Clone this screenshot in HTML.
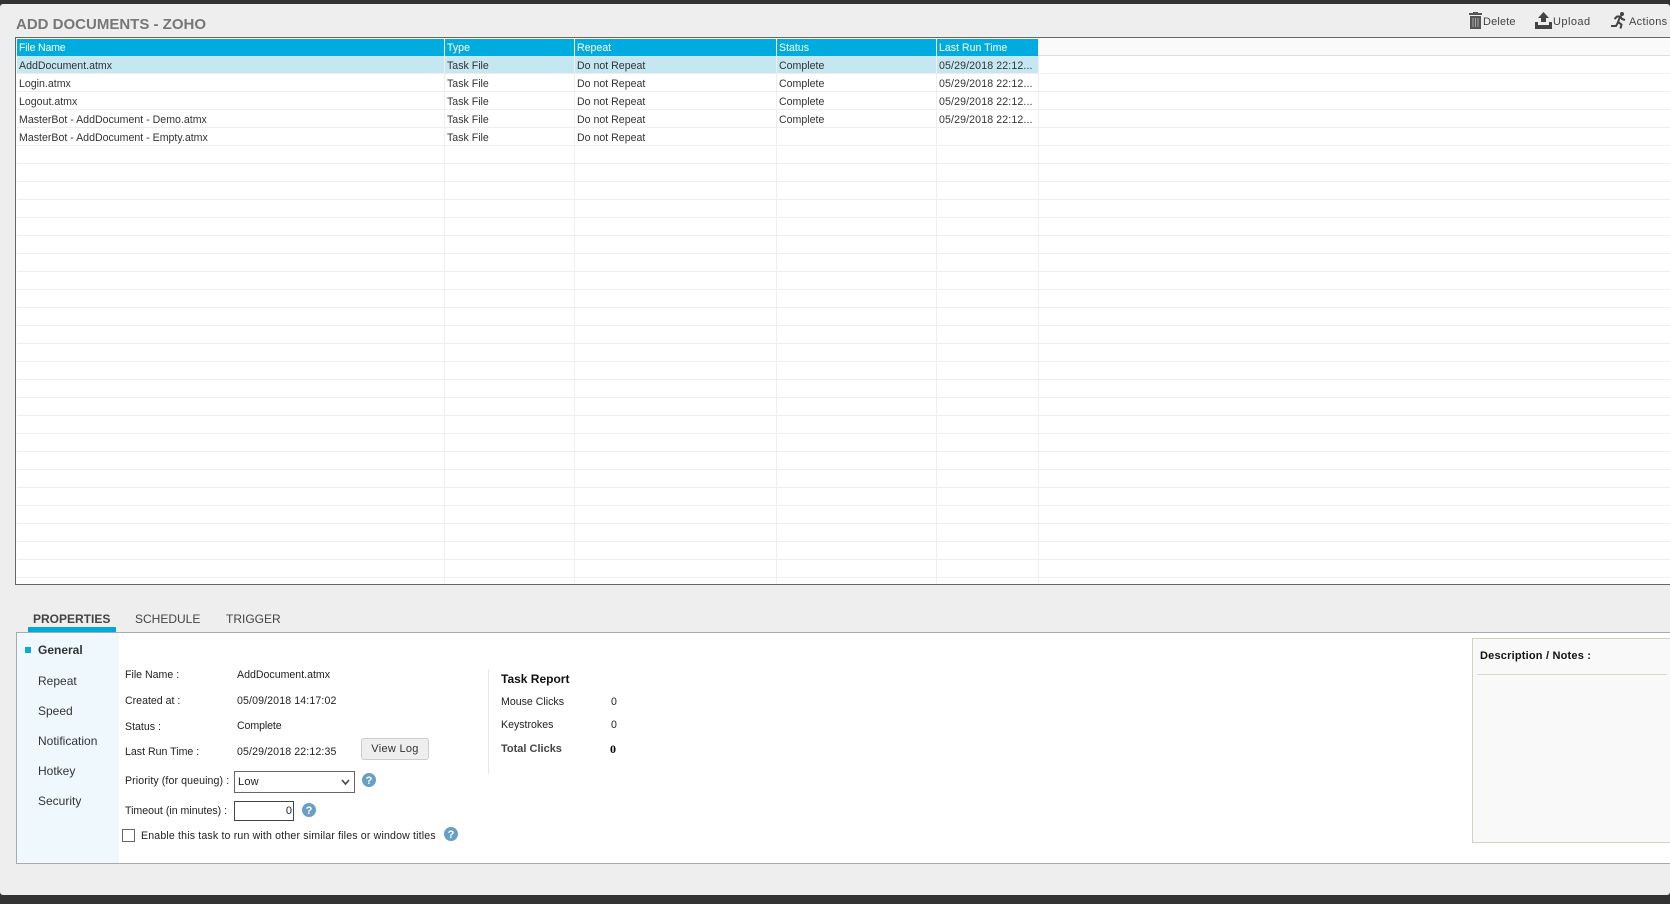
<!DOCTYPE html>
<html><head><meta charset="utf-8"><title>Add Documents - Zoho</title>
<style>
html,body{margin:0;padding:0;width:1670px;height:904px;overflow:hidden;background:#333}
body{font-family:"Liberation Sans",sans-serif;font-size:11px;color:#333;position:relative}
#p{position:absolute;left:0;top:4px;width:1670px;height:891px;background:#eee;border-radius:3px}
.a,.a *{box-sizing:border-box}
.a{position:absolute;white-space:nowrap}
.t{line-height:14px;height:14px;font-size:10.6px}
.d{letter-spacing:.12px}
.h{color:#fff}
.s{font-size:12px;color:#333;line-height:16px;height:16px}
.l{font-size:10.6px;color:#222;line-height:14px;height:14px}
</style></head><body>
<div id="p"></div>
<div class="a" style="left:16px;top:16px;font-size:15px;font-weight:bold;color:#777;line-height:18px">ADD DOCUMENTS - ZOHO</div>

<!-- toolbar -->
<svg class="a" style="left:1469px;top:12px" width="13" height="17" viewBox="0 0 13 17"><path fill="#555" d="M4 0h5v1h4v2H0V1h4zM1 4h11v13H1z"/><path fill="#aaa" d="M3.500 6h1v9h-1zM6 6h1v9H6zM8.500 6h1v9h-1z"/></svg>
<div class="a" style="left:1483px;top:15px;font-size:11px;letter-spacing:.15px;color:#444;line-height:14px">Delete</div>
<svg class="a" style="left:1535px;top:12px" width="17" height="17" viewBox="0 0 17 17"><path fill="#444" d="M8.500 0 14 6h-3v4H6V6H3zM0 10h3v3h11v-3h3v7H0z"/></svg>
<div class="a" style="left:1553px;top:15px;font-size:11px;letter-spacing:.45px;color:#444;line-height:14px">Upload</div>
<svg class="a" style="left:1610px;top:12px" width="17" height="17" viewBox="0 0 17 17"><circle cx="12" cy="2" r="2" fill="#444"/><path fill="none" stroke="#444" stroke-width="2" d="M15 8l-3-1-1.500-2.500H7L4.500 7M10 5L8 10l3.500 2.500-1 4M8 10.500L6 14H1"/></svg>
<div class="a" style="left:1629px;top:15px;font-size:11px;letter-spacing:.35px;color:#444;line-height:14px">Actions</div>

<!-- table -->
<div class="a" style="left:15px;top:37px;width:1655px;height:548px;background:#fff;border:solid #666;border-width:1.500px 0 1.500px 1.500px;overflow:hidden"></div>
<div class="a" style="left:17px;top:39px;width:1653px;height:544px;background:#fff;overflow:hidden">
  <div class="a" style="left:0;top:0;width:1653px;height:17px;background:#fafafa;border-bottom:1px solid #ddd"></div>
  <div class="a" style="left:0;top:0;width:1021px;height:17px;background:#00acdf"></div>
  <div class="a" style="left:0;top:17px;width:1021px;height:17px;background:#c5e7f1"></div>
  <div class="a" style="left:0;top:34px;width:1653px;height:510px;background:repeating-linear-gradient(to bottom,#eee 0,#eee 1px,#fff 1px,#fff 18px)"></div>
  <div class="a" style="left:427px;top:17px;width:1px;height:527px;background:#eee"></div>
  <div class="a" style="left:557px;top:17px;width:1px;height:527px;background:#eee"></div>
  <div class="a" style="left:759px;top:17px;width:1px;height:527px;background:#eee"></div>
  <div class="a" style="left:919px;top:17px;width:1px;height:527px;background:#eee"></div>
  <div class="a" style="left:1021px;top:17px;width:1px;height:527px;background:#eee"></div>
  <div class="a" style="left:427px;top:0;width:1px;height:17px;background:#fff"></div>
  <div class="a" style="left:557px;top:0;width:1px;height:17px;background:#fff"></div>
  <div class="a" style="left:759px;top:0;width:1px;height:17px;background:#fff"></div>
  <div class="a" style="left:919px;top:0;width:1px;height:17px;background:#fff"></div>
</div>

<div class="a t h" style="left:19px;top:41px;letter-spacing:-.2px">File Name</div>
<div class="a t h" style="left:447px;top:41px">Type</div>
<div class="a t h" style="left:577px;top:41px">Repeat</div>
<div class="a t h" style="left:779px;top:41px">Status</div>
<div class="a t h" style="left:939px;top:41px">Last Run Time</div>

<div class="a t" style="left:19px;top:59px">AddDocument.atmx</div>
<div class="a t" style="left:447px;top:59px">Task File</div>
<div class="a t" style="left:577px;top:59px">Do not Repeat</div>
<div class="a t" style="left:779px;top:59px">Complete</div>
<div class="a t d" style="left:939px;top:59px">05/29/2018 22:12...</div>

<div class="a t" style="left:19px;top:77px">Login.atmx</div>
<div class="a t" style="left:447px;top:77px">Task File</div>
<div class="a t" style="left:577px;top:77px">Do not Repeat</div>
<div class="a t" style="left:779px;top:77px">Complete</div>
<div class="a t d" style="left:939px;top:77px">05/29/2018 22:12...</div>

<div class="a t" style="left:19px;top:95px">Logout.atmx</div>
<div class="a t" style="left:447px;top:95px">Task File</div>
<div class="a t" style="left:577px;top:95px">Do not Repeat</div>
<div class="a t" style="left:779px;top:95px">Complete</div>
<div class="a t d" style="left:939px;top:95px">05/29/2018 22:12...</div>

<div class="a t" style="left:19px;top:113px">MasterBot - AddDocument - Demo.atmx</div>
<div class="a t" style="left:447px;top:113px">Task File</div>
<div class="a t" style="left:577px;top:113px">Do not Repeat</div>
<div class="a t" style="left:779px;top:113px">Complete</div>
<div class="a t d" style="left:939px;top:113px">05/29/2018 22:12...</div>

<div class="a t" style="left:19px;top:131px">MasterBot - AddDocument - Empty.atmx</div>
<div class="a t" style="left:447px;top:131px">Task File</div>
<div class="a t" style="left:577px;top:131px">Do not Repeat</div>

<!-- tabs -->
<div class="a" style="left:33px;top:611px;font-size:12px;font-weight:bold;color:#444;line-height:16px">PROPERTIES</div>
<div class="a" style="left:135px;top:611px;font-size:12px;color:#444;line-height:16px">SCHEDULE</div>
<div class="a" style="left:226px;top:611px;font-size:12px;color:#444;line-height:16px">TRIGGER</div>
<div class="a" style="left:28px;top:627px;width:88px;height:5px;background:#00a9dd"></div>

<!-- panel -->
<div class="a" style="left:16px;top:632px;width:1654px;height:232px;background:#fff;border:solid #aaa;border-width:1px 0 1px 1px"></div>
<div class="a" style="left:17px;top:633px;width:102px;height:230px;background:#eff9fd"></div>
<div class="a" style="left:25px;top:647px;width:6px;height:6px;background:#0fa8dc"></div>
<div class="a s" style="left:38px;top:642px;font-weight:bold">General</div>
<div class="a s" style="left:38px;top:673px">Repeat</div>
<div class="a s" style="left:38px;top:703px">Speed</div>
<div class="a s" style="left:38px;top:733px">Notification</div>
<div class="a s" style="left:38px;top:763px">Hotkey</div>
<div class="a s" style="left:38px;top:793px">Security</div>

<div class="a l" style="left:125px;top:668px">File Name :</div>
<div class="a l" style="left:237px;top:668px">AddDocument.atmx</div>
<div class="a l" style="left:125px;top:694px">Created at :</div>
<div class="a l d" style="left:237px;top:694px">05/09/2018 14:17:02</div>
<div class="a l" style="left:125px;top:720px">Status :</div>
<div class="a l" style="left:237px;top:719px;letter-spacing:-.1px">Complete</div>
<div class="a l" style="left:125px;top:745px">Last Run Time :</div>
<div class="a l d" style="left:237px;top:745px">05/29/2018 22:12:35</div>
<div class="a" style="left:361px;top:738px;width:68px;height:22px;background:#eee;border:1px solid #ccc;border-radius:3px;font-size:11px;letter-spacing:.3px;line-height:21px;text-align:center;color:#333">View Log</div>

<div class="a l" style="left:125px;top:774px;letter-spacing:.1px">Priority (for queuing) :</div>
<div class="a" style="left:234px;top:771px;width:121px;height:22px;background:#fff;border:1.500px solid #666;font-size:11px;line-height:21px;padding-left:3px;letter-spacing:.2px;color:#222">Low
  <svg class="a" style="left:106px;top:7px" width="9" height="7" viewBox="0 0 9 7"><path d="M1 1l3.500 4L8 1" fill="none" stroke="#444" stroke-width="1.600"/></svg>
</div>
<svg class="a" style="left:362px;top:773px" width="14" height="14" viewBox="0 0 14 14"><circle cx="7" cy="7" r="7" fill="#6a9fc5"/><text x="7" y="11" text-anchor="middle" font-family="Liberation Sans" font-weight="bold" font-size="11" fill="#fff">?</text></svg>

<div class="a l" style="left:125px;top:804px">Timeout (in minutes) :</div>
<div class="a" style="left:234px;top:801px;width:60px;height:20px;background:#fff;border:1.500px solid #444;font-size:11px;line-height:18px;text-align:right;padding-right:1px;color:#222">0</div>
<svg class="a" style="left:302px;top:803px" width="14" height="14" viewBox="0 0 14 14"><circle cx="7" cy="7" r="7" fill="#6a9fc5"/><text x="7" y="11" text-anchor="middle" font-family="Liberation Sans" font-weight="bold" font-size="11" fill="#fff">?</text></svg>

<div class="a" style="left:122px;top:829px;width:13px;height:13px;background:#fff;border:1px solid #666"></div>
<div class="a l" style="left:141px;top:829px;letter-spacing:.16px">Enable this task to run with other similar files or window titles</div>
<svg class="a" style="left:444px;top:827px" width="14" height="14" viewBox="0 0 14 14"><circle cx="7" cy="7" r="7" fill="#6a9fc5"/><text x="7" y="11" text-anchor="middle" font-family="Liberation Sans" font-weight="bold" font-size="11" fill="#fff">?</text></svg>

<!-- task report -->
<div class="a" style="left:488px;top:669px;width:1px;height:105px;background:#e8e8e0"></div>
<div class="a" style="left:501px;top:672px;font-size:12px;font-weight:bold;color:#111;line-height:14px">Task Report</div>
<div class="a l" style="left:501px;top:695px">Mouse Clicks</div>
<div class="a l" style="left:611px;top:695px">0</div>
<div class="a l" style="left:501px;top:718px">Keystrokes</div>
<div class="a l" style="left:611px;top:718px">0</div>
<div class="a l" style="left:501px;top:742px;font-weight:bold;color:#444;font-size:11px">Total Clicks</div>
<div class="a l" style="left:610px;top:742px;font-weight:bold;color:#000;font-family:'Liberation Serif',serif;font-size:12px">0</div>

<!-- description -->
<div class="a" style="left:1472px;top:638px;width:198px;height:205px;background:#f9f9f9;border:solid #d2d2bf;border-width:1px 0 1px 1px"></div>
<div class="a" style="left:1480px;top:649px;font-size:11px;font-weight:bold;color:#111;line-height:14px;letter-spacing:.2px">Description / Notes :</div>
<div class="a" style="left:1477px;top:674px;width:190px;height:1px;background:#d8d8c8"></div>
</body></html>
